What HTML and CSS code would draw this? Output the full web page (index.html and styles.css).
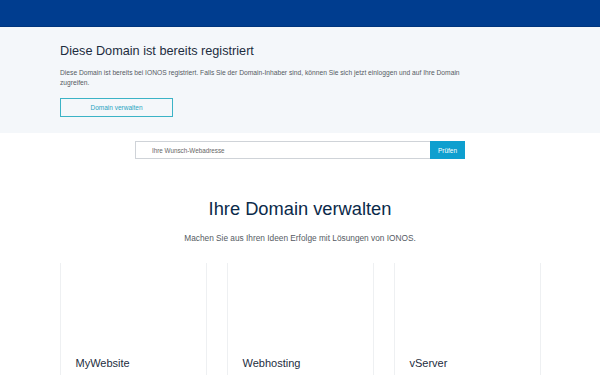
FILE: index.html
```html
<!DOCTYPE html>
<html lang="de">
<head>
    <meta charset="UTF-8">
    <meta name="viewport" content="width=device-width, initial-scale=1.0">
    <title>Ihre Domain verwalten</title>
    <link rel="stylesheet" href="styles.css">
</head>
<body>
    <header class="topbar"></header>

    <section class="notice">
        <div class="wrap">
            <h1>Diese Domain ist bereits registriert</h1>
            <p>Diese Domain ist bereits bei IONOS registriert. Falls Sie der Domain-Inhaber sind, können Sie sich jetzt einloggen und auf Ihre Domain zugreifen.</p>
            <button class="outline-btn">Domain verwalten</button>
        </div>
    </section>

    <form class="search" onsubmit="return false;">
        <input type="text" placeholder="Ihre Wunsch-Webadresse">
        <button type="submit">Prüfen</button>
    </form>

    <section class="manage">
        <h2>Ihre Domain verwalten</h2>
        <p class="sub">Machen Sie aus Ihren Ideen Erfolge mit Lösungen von IONOS.</p>
        <div class="cards">
            <div class="card"><h3>MyWebsite</h3></div>
            <div class="card"><h3>Webhosting</h3></div>
            <div class="card"><h3>vServer</h3></div>
        </div>
    </section>
</body>
</html>
```

FILE: styles.css
```css
body {
    font-family: "Liberation Sans", Arial, sans-serif;
    margin: 0;
    padding: 0;
    background: #fff;
    color: #1d2d3e;
}
.topbar {
    height: 27px;
    background: #003d8f;
    border-bottom: 1px solid #00357d;
    box-sizing: border-box;
}
.notice {
    background: #f4f7fa;
    padding: 16px 0 16px;
}
.wrap {
    width: 480px;
    margin: 0 auto;
}
.notice h1 {
    margin: 0;
    font-size: 12.7px;
    line-height: 16px;
    font-weight: normal;
    color: #1d2d3e;
}
.notice p {
    margin: 9px 0 0;
    width: 420px;
    font-size: 6.7px;
    line-height: 10px;
    color: #555b63;
}
.outline-btn {
    display: block;
    margin-top: 10px;
    width: 113px;
    height: 19px;
    padding: 0;
    background: transparent;
    border: 1px solid #3bb3c6;
    color: #2aa5c2;
    font-family: inherit;
    font-size: 6.5px;
    cursor: pointer;
}
.search {
    display: flex;
    width: 330px;
    margin: 8px auto 0;
    height: 18px;
}
.search input {
    flex: 1;
    box-sizing: border-box;
    height: 18px;
    margin: 0;
    border: 1px solid #cfd3d8;
    border-right: none;
    padding: 0 0 0 16px;
    font-family: inherit;
    font-size: 6.3px;
    color: #333;
    outline: none;
}
.search input::placeholder {
    color: #666;
}
.search button {
    width: 35px;
    height: 18px;
    border: none;
    padding: 0;
    background: #0e9fcf;
    color: #fff;
    font-family: inherit;
    font-size: 6.5px;
    cursor: pointer;
}
.manage {
    text-align: center;
}
.manage h2 {
    margin: 38px 0 0;
    font-size: 18.3px;
    line-height: 24px;
    font-weight: normal;
    color: #0b2a4a;
}
.sub {
    margin: 11px 0 0;
    font-size: 8.3px;
    line-height: 12px;
    color: #555b63;
}
.cards {
    display: flex;
    gap: 20px;
    width: 481px;
    margin: 19px auto 0;
}
.card {
    flex: 1;
    height: 140px;
    border-left: 1px solid #eef0f2;
    border-right: 1px solid #eef0f2;
    padding: 93px 15px 0;
    text-align: left;
}
.card h3 {
    margin: 0;
    font-size: 11px;
    line-height: 14px;
    font-weight: normal;
    color: #1d2d3e;
}
```
